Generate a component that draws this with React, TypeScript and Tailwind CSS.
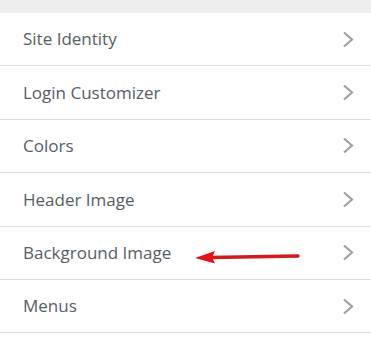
const items = [
  "Site Identity",
  "Login Customizer",
  "Colors",
  "Header Image",
  "Background Image",
  "Menus",
];

function Chevron() {
  return (
    <svg width="12" height="17" viewBox="0 0 12 17" className="shrink-0">
      <path
        d="M2 1.5 L10 8.5 L2 15.5"
        stroke="#a0a0a0"
        strokeWidth="2.2"
        fill="none"
      />
    </svg>
  );
}

export default function App() {
  return (
    <div className="w-[371px] h-[341px] bg-white overflow-hidden font-['Open_Sans',sans-serif]">
      <div className="h-[13px] bg-[#eeeeee]" />
      <ul>
        {items.map((label) => (
          <li
            key={label}
            className="relative h-[53.4px] flex items-center pl-[23px] pr-[17px] border-b border-[#dddddd] text-[#555d66] text-[17px]"
          >
            <span className="flex-1">{label}</span>
            {label === "Background Image" && (
              <svg
                className="absolute left-[194px] top-[21px]"
                width="106"
                height="16"
                viewBox="0 0 106 16"
              >
                <path
                  d="M16 9.5 L104 8"
                  stroke="#cf1a1f"
                  strokeWidth="3.5"
                  strokeLinecap="round"
                  fill="none"
                />
                <path d="M1 10 L21 3 L18 9.5 L21 15.5 Z" fill="#e3101a" />
              </svg>
            )}
            <Chevron />
          </li>
        ))}
      </ul>
    </div>
  );
}
